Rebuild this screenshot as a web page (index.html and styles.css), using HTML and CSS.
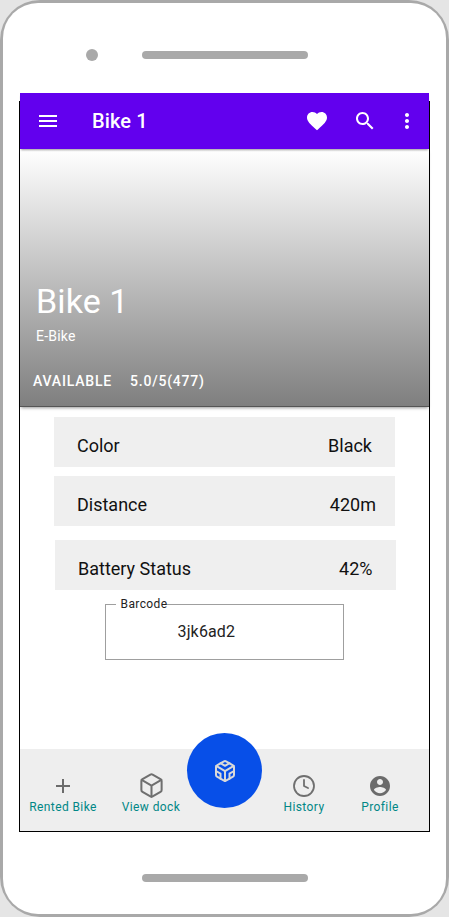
FILE: index.html
```html
<!DOCTYPE html>
<html lang="en">
<head>
<meta charset="utf-8">
<title>Bike 1</title>
<link rel="stylesheet" href="styles.css">
</head>
<body>
<div class="phone">
  <div class="phone-body">
    <div class="phone-top"><span class="camera"></span><span class="speaker"></span></div>
    <div class="screen">
      <header class="app-bar">
        <svg class="icon menu" viewBox="0 0 24 24"><path d="M3 18h18v-2H3v2zm0-5h18v-2H3v2zm0-7v2h18V6H3z"/></svg>
        <h1 class="app-title">Bike 1</h1>
        <svg class="icon" viewBox="0 0 24 24"><path d="M12 21.35l-1.45-1.32C5.4 15.36 2 12.28 2 8.5 2 5.42 4.42 3 7.5 3c1.74 0 3.41.81 4.5 2.09C13.09 3.81 14.76 3 16.5 3 19.58 3 22 5.42 22 8.5c0 3.78-3.4 6.86-8.55 11.54L12 21.35z"/></svg>
        <svg class="icon" viewBox="0 0 24 24"><path d="M15.5 14h-.79l-.28-.27C15.41 12.59 16 11.11 16 9.5 16 5.91 13.09 3 9.5 3S3 5.91 3 9.5 5.91 16 9.5 16c1.61 0 3.09-.59 4.23-1.57l.27.28v.79l5 4.99L20.49 19l-4.99-5zm-6 0C7.01 14 5 11.99 5 9.5S7.01 5 9.5 5 14 7.01 14 9.5 11.99 14 9.5 14z"/></svg>
        <svg class="icon more" viewBox="0 0 24 24"><path d="M12 8c1.1 0 2-.9 2-2s-.9-2-2-2-2 .9-2 2 .9 2 2 2zm0 2c-1.1 0-2 .9-2 2s.9 2 2 2 2-.9 2-2-.9-2-2-2zm0 6c-1.1 0-2 .9-2 2s.9 2 2 2 2-.9 2-2-.9-2-2-2z"/></svg>
      </header>
      <section class="hero">
        <h2 class="hero-title">Bike 1</h2>
        <p class="hero-type">E-Bike</p>
        <div class="hero-meta"><span>AVAILABLE</span><span>5.0/5(477)</span></div>
      </section>
      <main class="details">
        <div class="row"><span>Color</span><span>Black</span></div>
        <div class="row distance"><span>Distance</span><span>420m</span></div>
        <div class="row battery"><span>Battery Status</span><span>42%</span></div>
        <div class="barcode"><span class="barcode-label">Barcode</span><span class="barcode-value">3jk6ad2</span></div>
      </main>
      <nav class="bottom-nav">
        <a class="tab rented"><svg class="tab-icon" viewBox="0 0 24 24"><path class="solid" d="M19 13h-6v6h-2v-6H5v-2h6V5h2v6h6v2z"/></svg><span>Rented Bike</span></a>
        <a class="tab dock"><svg class="tab-icon cube" viewBox="0 0 24 24"><path d="M21 16V8a2 2 0 0 0-1-1.73l-7-4a2 2 0 0 0-2 0l-7 4A2 2 0 0 0 3 8v8a2 2 0 0 0 1 1.73l7 4a2 2 0 0 0 2 0l7-4A2 2 0 0 0 21 16z"/><path d="M3.27 6.96 12 12.01l8.73-5.05M12 22.08V12"/></svg><span>View dock</span></a>
        <a class="fab"><svg class="fab-icon" viewBox="0 0 24 24"><path d="M21 16V8a2 2 0 0 0-1-1.73l-7-4a2 2 0 0 0-2 0l-7 4A2 2 0 0 0 3 8v8a2 2 0 0 0 1 1.73l7 4a2 2 0 0 0 2 0l7-4A2 2 0 0 0 21 16z"/><path d="M7.5 4.21 12 6.81l4.5-2.6M7.5 19.79V14.6L3 12M21 12l-4.5 2.6v5.19M3.27 6.96 12 12.01l8.73-5.05M12 22.08V12"/></svg></a>
        <a class="tab history"><svg class="tab-icon" viewBox="0 0 24 24"><circle cx="12" cy="12" r="10"/><path d="M12 6v6l4 2"/></svg><span>History</span></a>
        <a class="tab profile"><svg class="tab-icon" viewBox="0 0 24 24"><path class="solid" d="M12 2C6.48 2 2 6.48 2 12s4.48 10 10 10 10-4.48 10-10S17.52 2 12 2zm0 3c1.66 0 3 1.34 3 3s-1.34 3-3 3-3-1.34-3-3 1.34-3 3-3zm0 14.2c-2.5 0-4.71-1.28-6-3.22.03-1.99 4-3.08 6-3.08 1.99 0 5.97 1.09 6 3.08-1.29 1.94-3.5 3.22-6 3.22z"/></svg><span>Profile</span></a>
      </nav>
    </div>
    <span class="speaker speaker-bottom"></span>
  </div>
</div>
</body>
</html>
```
FILE: styles.css
```css
* { box-sizing: border-box; }
body { margin: 0; background: #e5e5e5; font-family: Roboto, sans-serif; }
h1, h2, p { margin: 0; font-weight: 400; }
.phone { width: 449px; height: 917px; padding: 3px; background: #a9a9a9; border-radius: 40px; }
.phone-body { height: 911px; background: #fff; border-radius: 35px; display: flex; flex-direction: column; padding: 0 16px; }
.phone-top { height: 90px; flex: none; display: flex; align-items: center; padding: 14px 0 0 66.5px; }
.camera { width: 12.5px; height: 12.5px; border-radius: 50%; background: #a9a9a9; }
.speaker { width: 166px; height: 8.5px; border-radius: 5px; background: #a9a9a9; margin-left: 44px; }
.phone-top .camera, .phone-top .speaker { flex: none; }
.screen { width: 411px; height: 739px; flex: none; display: flex; flex-direction: column; padding: 0 1px 1px;
  background: linear-gradient(#000, #000) 0 8px / 1px 100% no-repeat, linear-gradient(#000, #000) 100% 8px / 1px 100% no-repeat, linear-gradient(#000, #000) 0 100% / 100% 1px no-repeat; }
.app-bar { height: 56px; flex: none; background: #6200ee; display: flex; align-items: center; padding: 0 10px 0 16px; gap: 24px; box-shadow: 0 2px 2px -1px rgba(0,0,0,.4); z-index: 1; }
.icon { width: 24px; height: 24px; flex: none; fill: #fff; }
.app-title { flex: 1; color: #fff; font-size: 20px; font-weight: 500; letter-spacing: .1px; margin-left: 8px; }
.app-bar .more { margin-left: -6px; }
.hero { height: 258px; flex: none; background: linear-gradient(#fff, #7f7f7f); border-bottom: 1px solid #555; box-shadow: 0 2px 3px -1px rgba(0,0,0,.4); color: #fff; padding: 132px 0 0 16px; }
.hero-title { font-size: 34px; line-height: 40px; letter-spacing: .1px; }
.hero-type { font-size: 14px; line-height: 20px; letter-spacing: .2px; margin-top: 5px; }
.hero-meta { display: flex; gap: 18px; margin: 27px 0 0 -3px; font-size: 14px; line-height: 16px; font-weight: 500; letter-spacing: .8px; }
.details { flex: 1; padding-top: 10px; display: flex; flex-direction: column; align-items: flex-start; }
.row { width: 341px; height: 50px; margin-left: 34px; padding: 6px 23px 0; background: #efefef; display: flex; align-items: center; justify-content: space-between; font-size: 18px; color: #111; }
.distance { margin-top: 9px; padding-right: 19px; }
.battery { margin: 14px 0 0 35px; padding-right: 23.5px; }
.barcode { width: 239px; height: 56px; margin: 14px 0 0 85px; border: 1px solid #9f9f9f; position: relative; padding: 0 0 2px 71.5px; display: flex; align-items: center; color: #222; }
.barcode::before { content: ""; position: absolute; left: 10px; top: -1px; width: 50px; height: 1px; background: #fff; }
.barcode-label { position: absolute; left: 14.5px; top: -8px; font-size: 12px; line-height: 14px; letter-spacing: .4px; }
.barcode-value { font-size: 16px; letter-spacing: .15px; }
.bottom-nav { height: 82px; flex: none; background: #eee; display: flex; align-items: flex-start; }
.tab { display: flex; flex-direction: column; align-items: center; height: 68px; padding-top: 25px; color: #018786; font-size: 12px; line-height: 14px; letter-spacing: .4px; white-space: nowrap; gap: 2px; }
.tab-icon { width: 24px; height: 24px; fill: none; stroke: #6f6f6f; stroke-width: 1.8; stroke-linecap: round; stroke-linejoin: round; }
.tab-icon .solid { fill: #6b6b6b; stroke: none; }
.cube { width: 27px; height: 27px; margin: -2px 0 -1px; }
.rented { width: 86px; }
.dock { width: 81px; padding-left: 9px; }
.fab { width: 75px; height: 75px; margin-top: -16px; border-radius: 50%; background: #074fe8; display: grid; place-items: center; }
.fab-icon { width: 24px; height: 24px; fill: none; stroke: #d9d9d9; stroke-width: 2; stroke-linecap: round; stroke-linejoin: round; }
.history { width: 84px; }
.profile { width: 68px; }
.speaker-bottom { margin: 41.5px 0 0 123px; flex: none; }
```
